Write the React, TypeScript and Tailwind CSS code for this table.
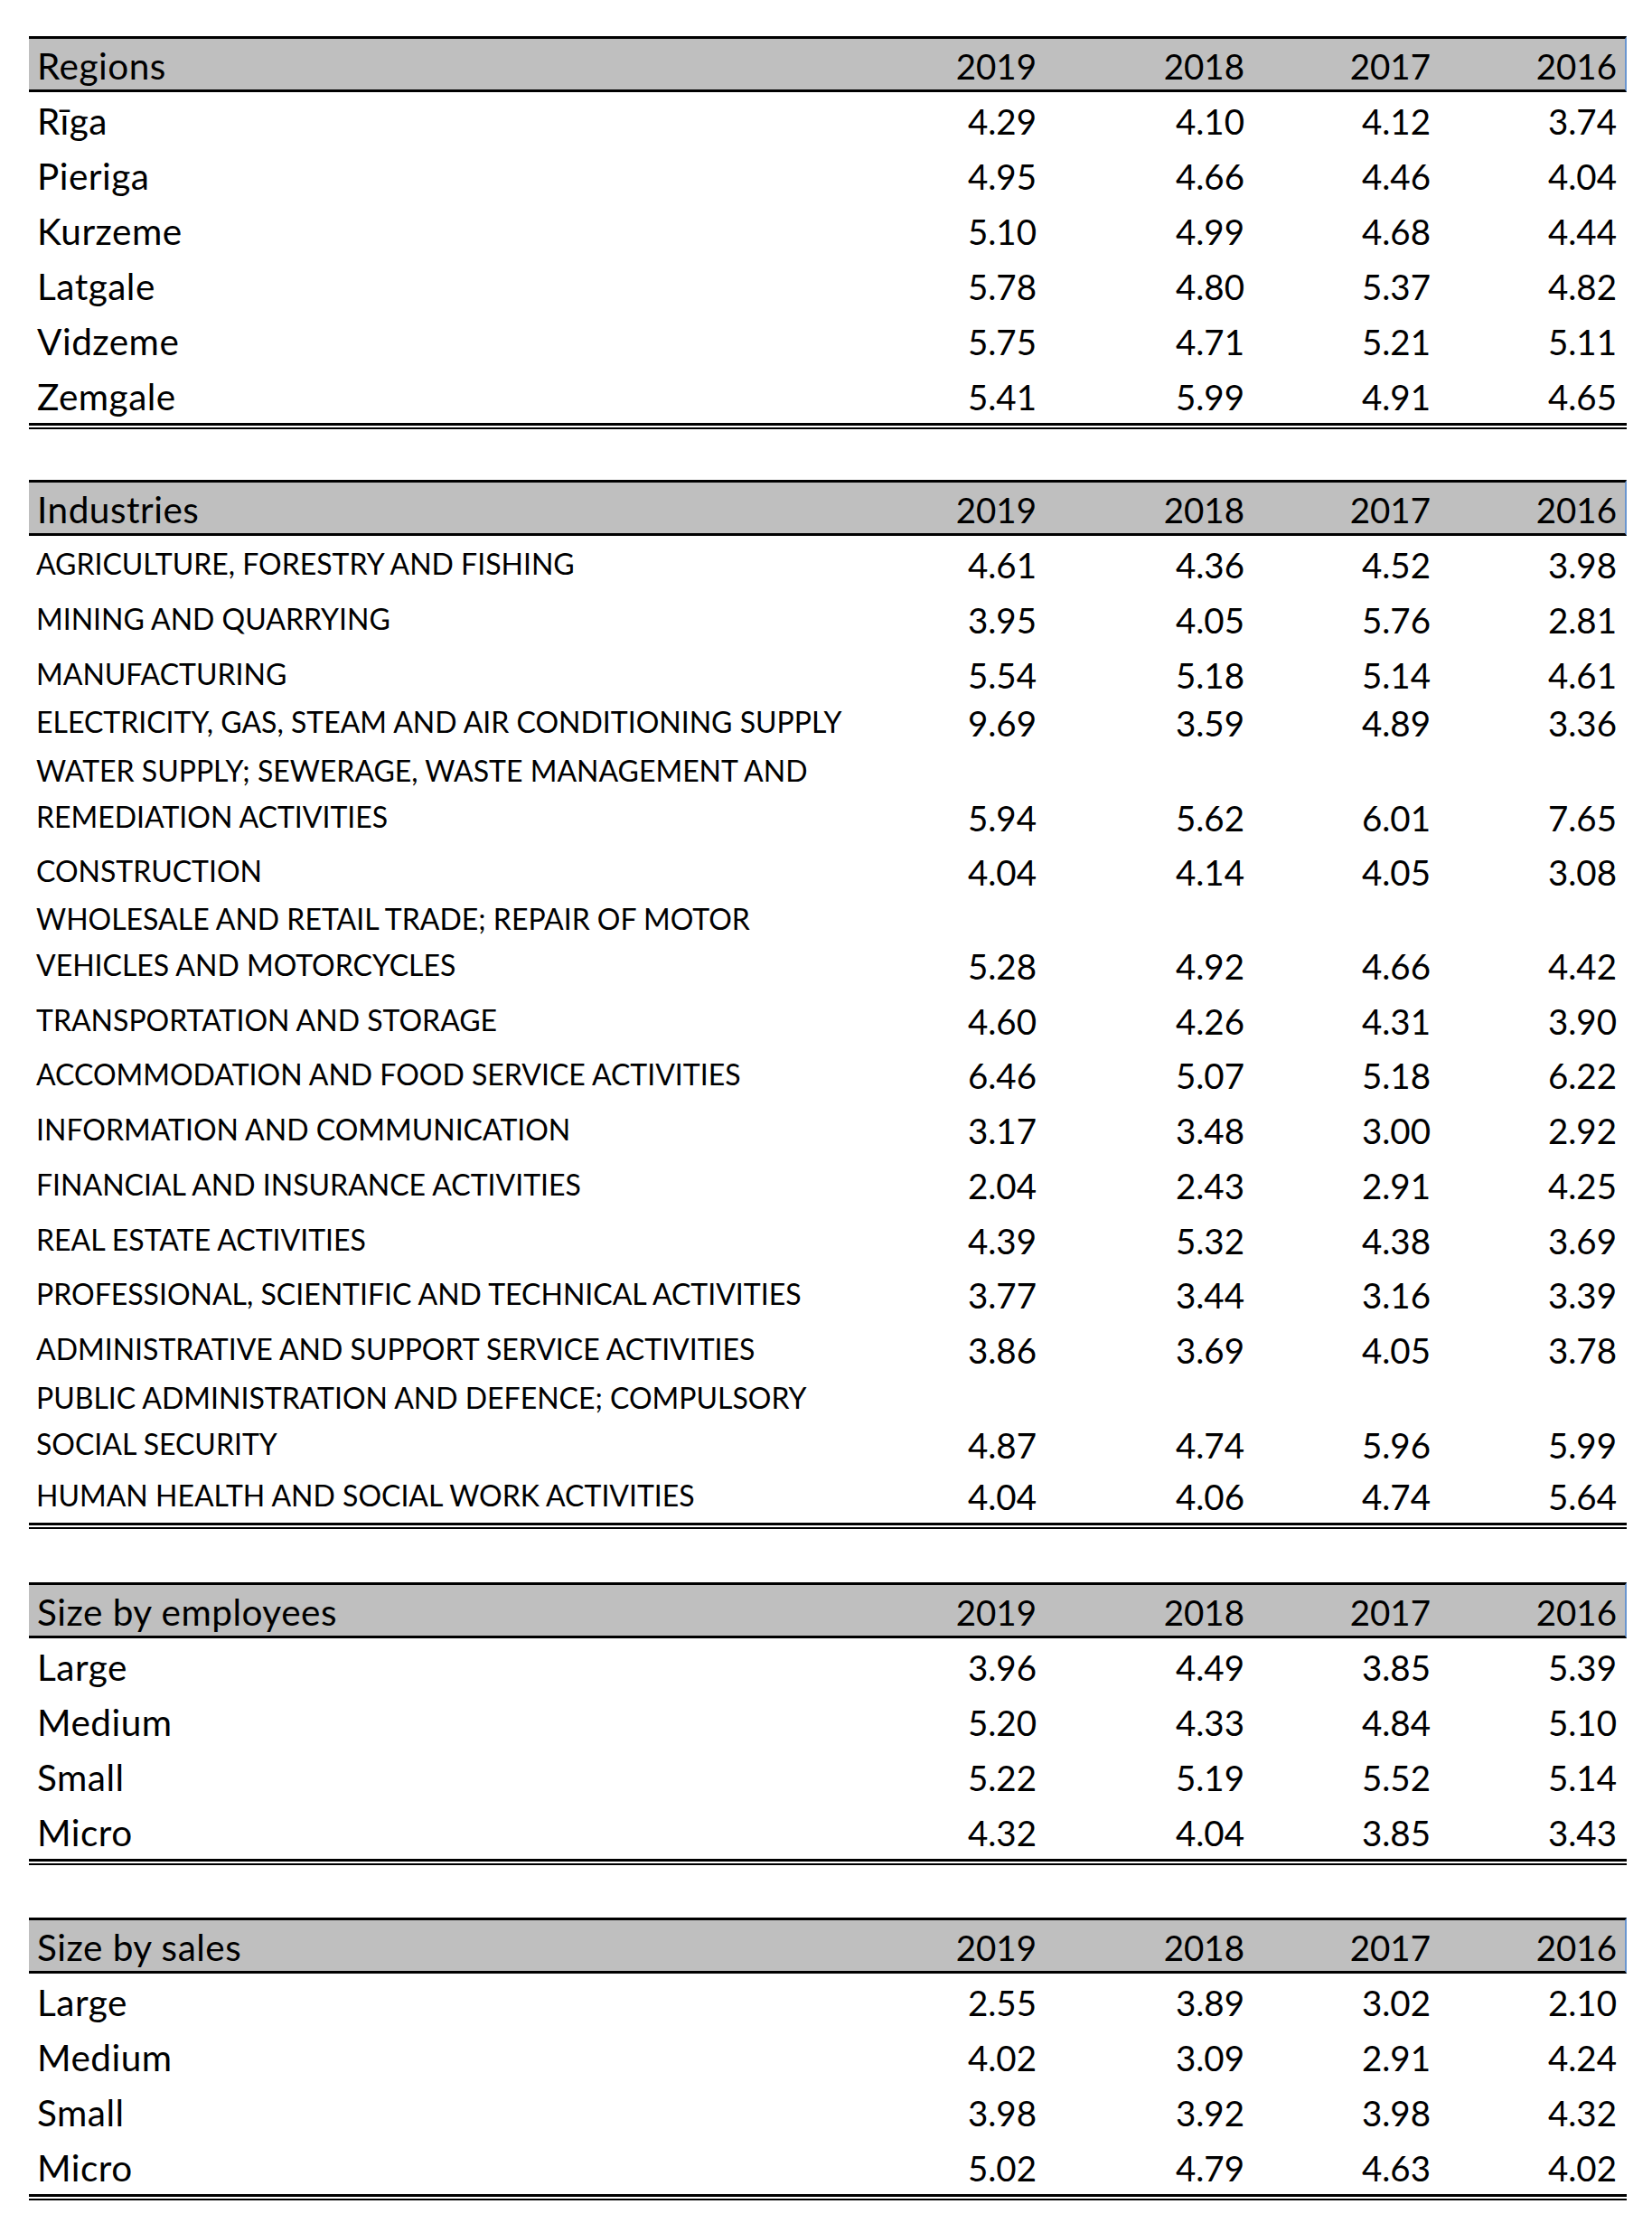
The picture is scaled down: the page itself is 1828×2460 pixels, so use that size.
const years = ['2019', '2018', '2017', '2016'];

type Row = { label: string[]; values: string[]; h: string };

const regions: Row[] = [
  { label: ['Rīga'], values: ['4.29', '4.10', '4.12', '3.74'], h: 'h-[61px]' },
  { label: ['Pieriga'], values: ['4.95', '4.66', '4.46', '4.04'], h: 'h-[61px]' },
  { label: ['Kurzeme'], values: ['5.10', '4.99', '4.68', '4.44'], h: 'h-[61px]' },
  { label: ['Latgale'], values: ['5.78', '4.80', '5.37', '4.82'], h: 'h-[61px]' },
  { label: ['Vidzeme'], values: ['5.75', '4.71', '5.21', '5.11'], h: 'h-[61px]' },
  { label: ['Zemgale'], values: ['5.41', '5.99', '4.91', '4.65'], h: 'h-[61px]' },
];

const industries: Row[] = [
  { label: ['AGRICULTURE, FORESTRY AND FISHING'], values: ['4.61', '4.36', '4.52', '3.98'], h: 'h-[61px]' },
  { label: ['MINING AND QUARRYING'], values: ['3.95', '4.05', '5.76', '2.81'], h: 'h-[61px]' },
  { label: ['MANUFACTURING'], values: ['5.54', '5.18', '5.14', '4.61'], h: 'h-[61px]' },
  { label: ['ELECTRICITY, GAS, STEAM AND AIR CONDITIONING SUPPLY'], values: ['9.69', '3.59', '4.89', '3.36'], h: 'h-[53px]' },
  {
    label: ['WATER SUPPLY; SEWERAGE, WASTE MANAGEMENT AND', 'REMEDIATION ACTIVITIES'],
    values: ['5.94', '5.62', '6.01', '7.65'],
    h: 'h-[105px]',
  },
  { label: ['CONSTRUCTION'], values: ['4.04', '4.14', '4.05', '3.08'], h: 'h-[60px]' },
  {
    label: ['WHOLESALE AND RETAIL TRADE; REPAIR OF MOTOR', 'VEHICLES AND MOTORCYCLES'],
    values: ['5.28', '4.92', '4.66', '4.42'],
    h: 'h-[104px]',
  },
  { label: ['TRANSPORTATION AND STORAGE'], values: ['4.60', '4.26', '4.31', '3.90'], h: 'h-[61px]' },
  { label: ['ACCOMMODATION AND FOOD SERVICE ACTIVITIES'], values: ['6.46', '5.07', '5.18', '6.22'], h: 'h-[60px]' },
  { label: ['INFORMATION AND COMMUNICATION'], values: ['3.17', '3.48', '3.00', '2.92'], h: 'h-[61px]' },
  { label: ['FINANCIAL AND INSURANCE ACTIVITIES'], values: ['2.04', '2.43', '2.91', '4.25'], h: 'h-[61px]' },
  { label: ['REAL ESTATE ACTIVITIES'], values: ['4.39', '5.32', '4.38', '3.69'], h: 'h-[61px]' },
  { label: ['PROFESSIONAL, SCIENTIFIC AND TECHNICAL ACTIVITIES'], values: ['3.77', '3.44', '3.16', '3.39'], h: 'h-[60px]' },
  { label: ['ADMINISTRATIVE AND SUPPORT SERVICE ACTIVITIES'], values: ['3.86', '3.69', '4.05', '3.78'], h: 'h-[61px]' },
  {
    label: ['PUBLIC ADMINISTRATION AND DEFENCE; COMPULSORY', 'SOCIAL SECURITY'],
    values: ['4.87', '4.74', '5.96', '5.99'],
    h: 'h-[105px]',
  },
  { label: ['HUMAN HEALTH AND SOCIAL WORK ACTIVITIES'], values: ['4.04', '4.06', '4.74', '5.64'], h: 'h-[57px]' },
];

const employees: Row[] = [
  { label: ['Large'], values: ['3.96', '4.49', '3.85', '5.39'], h: 'h-[61px]' },
  { label: ['Medium'], values: ['5.20', '4.33', '4.84', '5.10'], h: 'h-[61px]' },
  { label: ['Small'], values: ['5.22', '5.19', '5.52', '5.14'], h: 'h-[61px]' },
  { label: ['Micro'], values: ['4.32', '4.04', '3.85', '3.43'], h: 'h-[61px]' },
];

const sales: Row[] = [
  { label: ['Large'], values: ['2.55', '3.89', '3.02', '2.10'], h: 'h-[61px]' },
  { label: ['Medium'], values: ['4.02', '3.09', '2.91', '4.24'], h: 'h-[61px]' },
  { label: ['Small'], values: ['3.98', '3.92', '3.98', '4.32'], h: 'h-[61px]' },
  { label: ['Micro'], values: ['5.02', '4.79', '4.63', '4.02'], h: 'h-[61px]' },
];

// right-aligned number columns, widths picked so the right edges line up with the sheet
const colWidths = ['w-[200px]', 'w-[230px]', 'w-[206px]', 'w-[206px]'];

function NumberCells({ values }: { values: string[] }) {
  return (
    <>
      {values.map((v, i) => (
        <div key={i} className={`${colWidths[i]} shrink-0 text-right text-[38.5px] leading-[46px] pb-[6px]`}>
          {v}
        </div>
      ))}
    </>
  );
}

function Section({
  title,
  rows,
  small,
  gap = 'mb-[59px]',
}: {
  title: string;
  rows: Row[];
  small?: boolean;
  gap?: string;
}) {
  return (
    <div className={gap}>
      <div className="flex h-[62px] items-end border-y-[3px] border-black border-r-2 border-r-[#6b96cf] bg-[#bfbfbf] pr-[9px]">
        <div className="min-w-0 flex-1 pl-[9px] text-[40.5px] tracking-[0.5px] leading-[46px] pb-[3px]">{title}</div>
        {years.map((y, i) => (
          <div key={y} className={`${colWidths[i]} shrink-0 text-right text-[38.5px] leading-[46px] pb-[3px]`}>
            {y}
          </div>
        ))}
      </div>

      {rows.map((r) => (
        <div key={r.label.join(' ')} className={`flex ${r.h} items-end pr-[11px]`}>
          {small ? (
            <div className="min-w-0 flex-1 pl-[8px] text-[32px] leading-[51px] pb-[5px] whitespace-nowrap">
              {r.label.map((l) => (
                <div key={l}>{l}</div>
              ))}
            </div>
          ) : (
            <div className="min-w-0 flex-1 pl-[9px] text-[40.5px] tracking-[0.5px] leading-[46px] pb-[6px]">
              {r.label[0]}
            </div>
          )}
          <NumberCells values={r.values} />
        </div>
      ))}

      {/* double bottom border */}
      <div className="h-[7px] border-t-[3px] border-b-2 border-black" />
    </div>
  );
}

export default function App() {
  return (
    <div className="min-h-[2460px] w-[1828px] bg-white pt-[40px] pl-[32px] font-['Lato','Carlito','Liberation_Sans',sans-serif] text-black">
      <div className="w-[1768px]">
        <Section title="Regions" rows={regions} gap="mb-[56px]" />
        <Section title="Industries" rows={industries} small />
        <Section title="Size by employees" rows={employees} gap="mb-[58px]" />
        <Section title="Size by sales" rows={sales} />
      </div>
    </div>
  );
}
